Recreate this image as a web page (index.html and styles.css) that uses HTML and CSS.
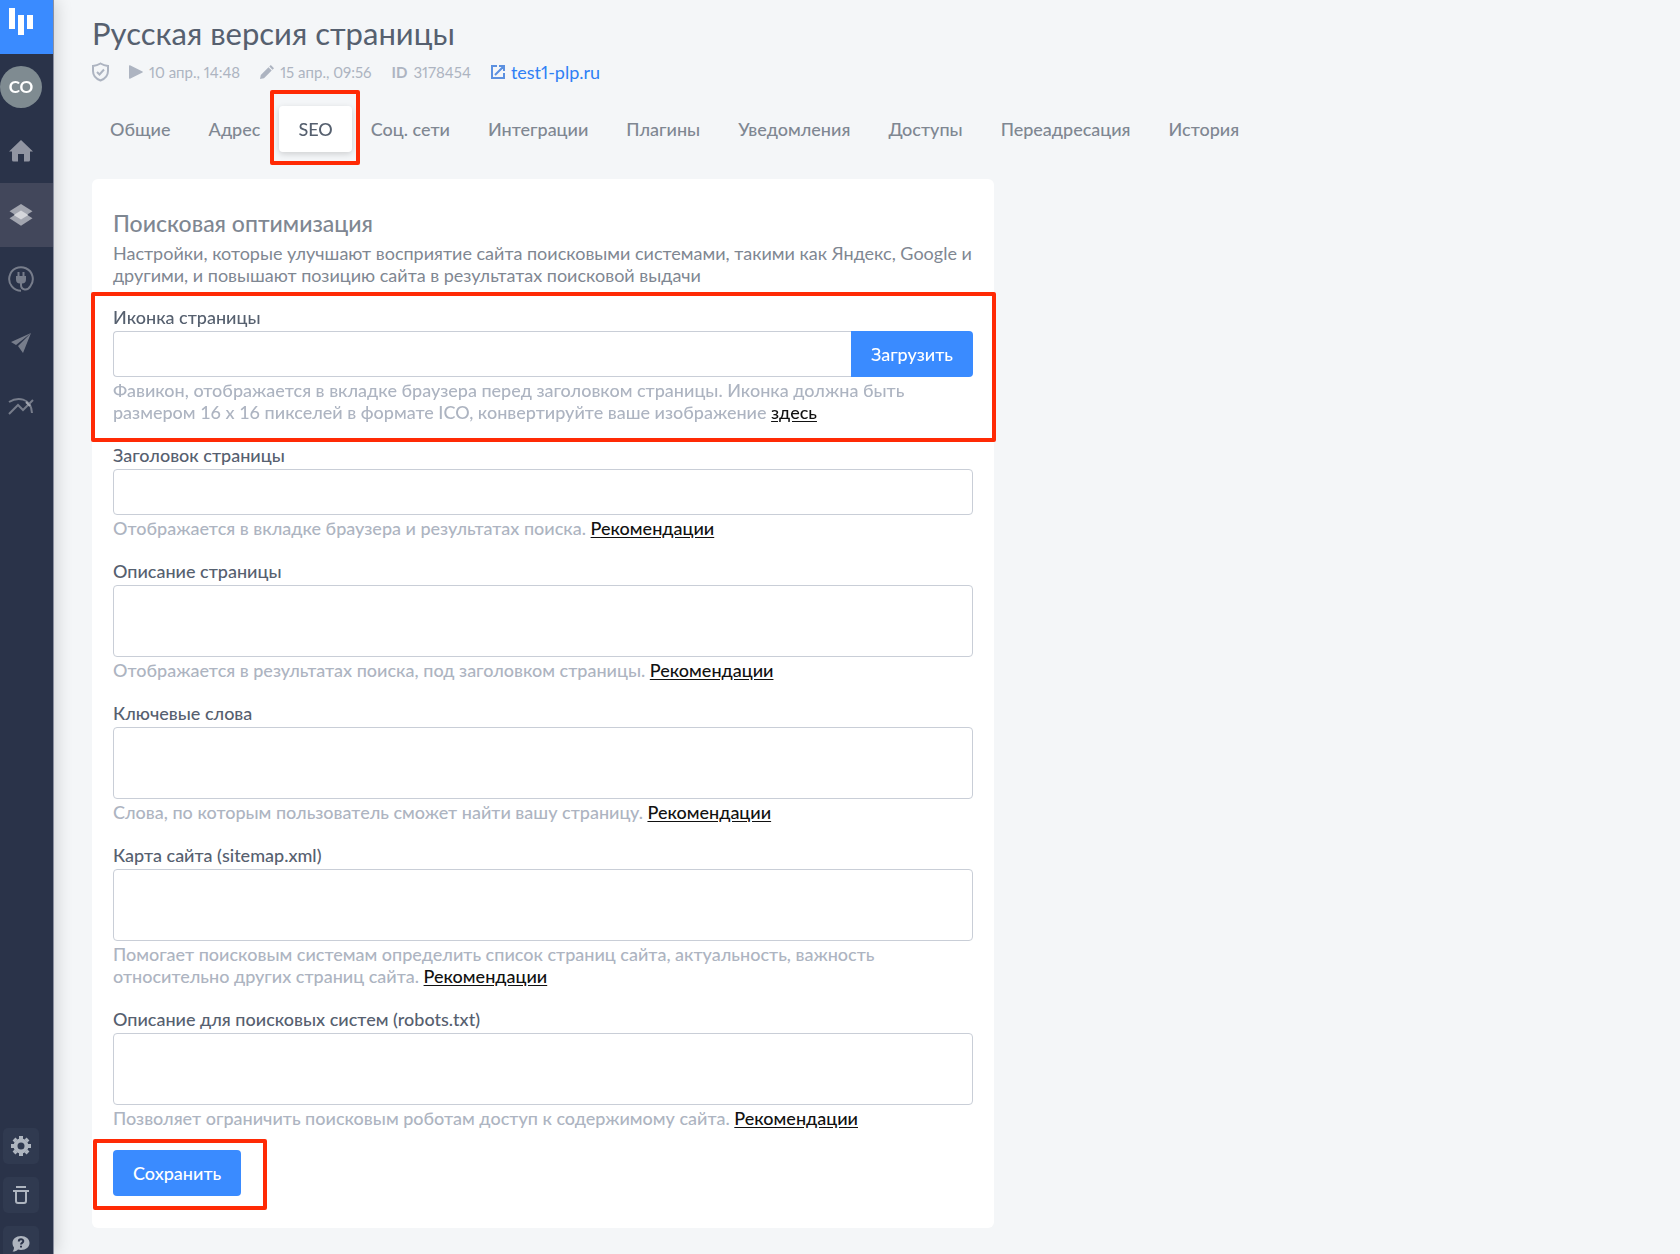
FILE: index.html
```html
<!DOCTYPE html>
<html lang="ru">
<head>
  <meta charset="UTF-8">
  <meta name="viewport" content="width=device-width, initial-scale=1.0">
  <title>Русская версия страницы</title>
  <link rel="stylesheet" href="styles.css">
</head>
<body>

  <aside class="sidebar">
    <a href="#" class="logo" aria-label="LP">
      <svg width="24" height="28" viewBox="0 0 24 28" fill="#fff"><path d="M0 0h6v21H0zM9 7h6v20H9zM18 7h6v14h-6z"/></svg>
    </a>
    <nav class="side-nav">
      <a href="#" class="side-link profile"><span class="avatar">CO</span></a>
      <a href="#" class="side-link" aria-label="Главная">
        <svg width="24" height="22" viewBox="0 0 24 22" fill="#9195a2"><path d="M12 0l12 11.500h-3V20q0 1.500-1.500 1.500H15V14H9v7.500H4.500Q3 21.500 3 20v-8.500H0z"/></svg>
      </a>
      <a href="#" class="side-link active" aria-label="Страницы">
        <svg width="24" height="24" viewBox="0 0 24 24"><path d="M12 1l11.500 7.300L12 15.500.5 8.300z" fill="#a3a6b0"/><path d="M12 8l11.500 7.300L12 22.800.5 15.300z" fill="#a3a6b0"/><path d="M12 7.500l7.300 4.500-7.300 4.500L4.700 12z" fill="#d5d6db"/></svg>
      </a>
      <a href="#" class="side-link" aria-label="Интеграции">
        <svg width="26" height="26" viewBox="0 0 26 26" fill="none" stroke="#777d8b" stroke-width="2"><path d="M13 24.800A11.800 11.800 0 1 1 22.500 20c-3 5.500-9.500 4-9.500-1v-3"/><path d="M10.500 6v5M15.500 6v5"/><path d="M9 11h8v2.500q0 3-3 3h-2q-3 0-3-3z" fill="#777d8b"/></svg>
      </a>
      <a href="#" class="side-link" aria-label="Рассылки">
        <svg width="22" height="22" viewBox="0 0 22 22" fill="#777d8b"><path d="M21 1L1 10l5 3zM21 1L8 14l5 7z"/></svg>
      </a>
      <a href="#" class="side-link" aria-label="Статистика">
        <svg width="26" height="20" viewBox="0 0 26 20" fill="none" stroke="#777d8b" stroke-width="2"><path d="M1 17l9-9 5 5L25 3"/><path d="M1 5c8-5 22-5 23 11"/><path d="M18 5l4 4" stroke="#a3a7b1"/></svg>
      </a>
    </nav>
    <div class="side-tools">
      <button type="button" class="tool" aria-label="Настройки">
        <svg width="20" height="20" viewBox="0 0 20 20" fill="none" stroke="#aeb5bf"><circle cx="10" cy="10" r="5.500" stroke-width="4"/><path d="M10 0v3M10 17v3M0 10h3M17 10h3M3 3l2 2M15 15l2 2M3 17l2-2M15 5l2-2" stroke-width="4"/></svg>
      </button>
      <button type="button" class="tool" aria-label="Корзина">
        <svg width="16" height="18" viewBox="0 0 16 18" fill="none" stroke="#aeb5bf" stroke-width="2"><path d="M3 1h10M0 5h16M3 5v10q0 2 2 2h6q2 0 2-2V5"/></svg>
      </button>
      <button type="button" class="tool" aria-label="Помощь">
        <svg width="18" height="16" viewBox="0 0 18 16"><path d="M9 0c5 0 8.500 3 8.500 7S14 14 9 14c-1 0-2-.2-3-.5C4.500 15 2.500 15.700.5 15.500 1.500 14.500 2 13 2 11.500 1 10.300.5 8.700.5 7 .5 3 4 0 9 0z" fill="#aeb5bf"/><path d="M6.800 5.500c0-3 4.500-2.800 4.500-.4C11.300 7 9 6.800 9 8.500M9 9.800v1.700" fill="none" stroke="#2a3349" stroke-width="2"/></svg>
      </button>
    </div>
  </aside>

  <main class="content">
    <h1>Русская версия страницы</h1>

    <div class="meta">
      <svg class="shield" width="17" height="20" viewBox="0 0 17 20" fill="none" stroke="#adb4c1" stroke-width="2"><path d="M8.500 1.500Q12 3.500 16 4v5c0 5-3.500 8-7.500 9.500C4.500 17 1 14 1 9V4q4-.5 7.500-2.500z"/><path d="M5 10l2.500 2.500L12 7.500"/></svg>
      <span class="meta-item">
        <svg width="14" height="14" viewBox="0 0 14 14" fill="#adb4c1"><path d="M0 1q0-1 1-.7L13.500 6.500q.6.500 0 1L1 13.700q-1 .3-1-.7z"/></svg>
        10 апр., 14:48
      </span>
      <span class="meta-item">
        <svg width="14" height="14" viewBox="0 0 14 14" fill="#adb4c1"><path d="M0 14l.8-4L8.500 2.300l3.200 3.200L4 13.200zM9.300 1.500L10.800 0 14 3.200l-1.500 1.500z"/></svg>
        15 апр., 09:56
      </span>
      <span class="meta-item"><b>ID</b> 3178454</span>
      <a href="#" class="site-link">
        <svg width="14" height="14" viewBox="0 0 14 14" fill="none" stroke="#5b90e0" stroke-width="2"><path d="M6 1H1v12h12V8M8 1h5v5M13 1L4 10"/></svg>
        test1-plp.ru
      </a>
    </div>

    <nav class="tabs">
      <a href="#">Общие</a>
      <a href="#">Адрес</a>
      <a href="#" class="active mark mark-tab">SEO</a>
      <a href="#">Соц. сети</a>
      <a href="#">Интеграции</a>
      <a href="#">Плагины</a>
      <a href="#">Уведомления</a>
      <a href="#">Доступы</a>
      <a href="#">Переадресация</a>
      <a href="#">История</a>
    </nav>

    <form class="card">
      <h2>Поисковая оптимизация</h2>
      <p class="intro">Настройки, которые улучшают восприятие сайта поисковыми системами, такими как Яндекс, Google и другими, и повышают позицию сайта в результатах поисковой выдачи</p>

      <div class="field mark mark-field">
        <label for="favicon">Иконка страницы</label>
        <div class="upload">
          <input type="text" id="favicon">
          <button type="button" class="btn">Загрузить</button>
        </div>
        <p class="hint">Фавикон, отображается в вкладке браузера перед заголовком страницы. Иконка должна быть размером 16 x 16 пикселей в формате ICO, конвертируйте ваше изображение <a href="#">здесь</a></p>
      </div>

      <div class="field">
        <label for="title">Заголовок страницы</label>
        <input type="text" id="title">
        <p class="hint">Отображается в вкладке браузера и результатах поиска. <a href="#">Рекомендации</a></p>
      </div>

      <div class="field">
        <label for="description">Описание страницы</label>
        <textarea id="description"></textarea>
        <p class="hint">Отображается в результатах поиска, под заголовком страницы. <a href="#">Рекомендации</a></p>
      </div>

      <div class="field">
        <label for="keywords">Ключевые слова</label>
        <textarea id="keywords"></textarea>
        <p class="hint">Слова, по которым пользователь сможет найти вашу страницу. <a href="#">Рекомендации</a></p>
      </div>

      <div class="field">
        <label for="sitemap">Карта сайта (sitemap.xml)</label>
        <textarea id="sitemap"></textarea>
        <p class="hint">Помогает поисковым системам определить список страниц сайта, актуальность, важность относительно других страниц сайта. <a href="#">Рекомендации</a></p>
      </div>

      <div class="field">
        <label for="robots">Описание для поисковых систем (robots.txt)</label>
        <textarea id="robots"></textarea>
        <p class="hint">Позволяет ограничить поисковым роботам доступ к содержимому сайта. <a href="#">Рекомендации</a></p>
      </div>

      <div class="save mark mark-save">
        <button type="submit" class="btn">Сохранить</button>
      </div>
    </form>
  </main>

</body>
</html>
```

FILE: styles.css
```css
* {
  box-sizing: border-box;
}

body {
  margin: 0;
  display: flex;
  min-height: 100vh;
  background-color: #f4f6f8;
  font-family: Lato, "Noto Sans", sans-serif;
  font-size: 18px;
  font-weight: 500;
  line-height: 22px;
  color: #56606f;
}

h1, h2, p {
  margin: 0;
}

svg {
  display: block;
  flex: none;
}

/* sidebar */
.sidebar {
  position: sticky;
  top: 0;
  flex: none;
  display: flex;
  flex-direction: column;
  width: 54px;
  height: 100vh;
  overflow: clip;
  overflow-clip-margin: 20px;
  background-color: #2a3349;
  border-right: 1px solid #8b90a0;
  box-shadow: 2px 0 16px rgba(0, 0, 0, 0.16);
}

.logo {
  display: flex;
  height: 54px;
  padding: 8px 0 0 9px;
  background-color: #3a8bff;
}

.side-link {
  display: flex;
  align-items: center;
  justify-content: center;
  height: 64px;
  padding-right: 11px;
  text-decoration: none;
}

.side-link.profile {
  height: 65px;
}

.side-link.active {
  background-color: #42475b;
}

.avatar {
  flex: none;
  width: 42px;
  height: 42px;
  border-radius: 50%;
  background-color: #7f8b91;
  color: #fff;
  font-size: 17px;
  font-weight: 700;
  line-height: 42px;
  text-align: center;
}

.side-tools {
  display: flex;
  flex-direction: column;
  gap: 13px;
  margin: auto 0 -8px 3px;
}

.tool {
  display: flex;
  align-items: center;
  justify-content: center;
  width: 36px;
  height: 36px;
  padding: 0;
  border: none;
  border-radius: 5px;
  background-color: #303a50;
  cursor: pointer;
}

/* page header */
.content {
  flex: 1;
  padding: 15px 38px 27px;
}

h1 {
  font-size: 31px;
  font-weight: 400;
  line-height: 36px;
}

.meta {
  display: flex;
  align-items: center;
  gap: 20px;
  margin-top: 10px;
  font-size: 15px;
  font-weight: 400;
  font-variant-numeric: proportional-nums;
  color: #adb4c1;
}

.meta-item,
.site-link {
  display: flex;
  align-items: center;
  gap: 6px;
}

.site-link {
  font-size: 18px;
  color: #2f80f5;
  text-decoration: none;
}

.tabs {
  display: flex;
  margin: 23px 0 27px -1px;
}

.tabs a {
  padding: 12px 19px;
  border-radius: 4px;
  color: #7f8792;
  text-decoration: none;
  white-space: nowrap;
}

.tabs .active {
  background-color: #fff;
  color: #56606f;
  box-shadow: 0 2px 6px rgba(0, 0, 0, 0.16);
}

/* settings form */
.card {
  max-width: 902px;
  padding: 30px 21px 32px;
  border-radius: 6px;
  background-color: #fff;
}

h2 {
  margin-bottom: 5px;
  font-size: 23px;
  font-weight: 500;
  line-height: 28px;
  color: #7f8792;
}

.intro {
  margin-bottom: 20px;
  font-weight: 400;
  color: #7f8792;
}

.field {
  margin-bottom: 21px;
}

label {
  display: block;
  margin-bottom: 3px;
}

input,
textarea {
  display: block;
  width: 100%;
  height: 46px;
  padding: 10px 16px;
  border: 1px solid #c9ced7;
  border-radius: 4px;
  background-color: #fff;
  font: inherit;
  color: inherit;
}

textarea {
  height: 72px;
  resize: none;
}

.upload {
  display: flex;
}

.upload input {
  flex: 1;
  border-right: none;
  border-radius: 4px 0 0 4px;
}

.upload .btn {
  border-radius: 0 4px 4px 0;
}

.btn {
  display: block;
  height: 46px;
  padding: 0 20px;
  border: none;
  border-radius: 4px;
  background-color: #3a8bff;
  color: #fff;
  font: inherit;
  cursor: pointer;
}

.hint {
  margin-top: 2px;
  color: #adb4c1;
}

.hint a {
  color: #111;
  text-underline-offset: 2px;
}

.save {
  width: fit-content;
}

/* red frames around the steps */
.mark {
  position: relative;
}

.mark::after {
  content: "";
  position: absolute;
  border: 4px solid #ff2a05;
  border-radius: 2px;
  pointer-events: none;
}

.mark-tab::after {
  inset: -16px -8px -13px -9px;
}

.mark-field::after {
  inset: -14px -23px -19px -22px;
}

.mark-save::after {
  inset: -11px -26px -14px -20px;
}
```
